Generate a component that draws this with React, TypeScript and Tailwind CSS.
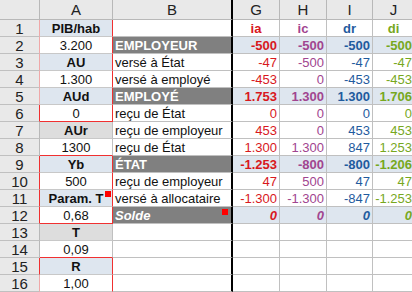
import React from 'react'

type Kind = 'label' | 'gray' | 'value'

interface ACell {
  text: string
  kind: Kind
  rRed?: boolean
  bRed?: boolean
  lhdr?: 'red' | 'pink'
  mark?: boolean
}

interface BCell {
  text: string
  head?: boolean
  italic?: boolean
  mark?: boolean
}

const aCells: ACell[] = [
  { text: 'PIB/hab', kind: 'label', rRed: true, lhdr: 'pink' },
  { text: '3.200', kind: 'value', rRed: true, lhdr: 'pink' },
  { text: 'AU', kind: 'label', rRed: true, lhdr: 'pink' },
  { text: '1.300', kind: 'value', rRed: true, lhdr: 'pink' },
  { text: 'AUd', kind: 'label', rRed: true, lhdr: 'pink' },
  { text: '0', kind: 'value', rRed: true, bRed: true, lhdr: 'red' },
  { text: 'AUr', kind: 'gray' },
  { text: '1300', kind: 'value', bRed: true },
  { text: 'Yb', kind: 'label', rRed: true, lhdr: 'red' },
  { text: '500', kind: 'value', rRed: true, lhdr: 'red' },
  { text: 'Param. T', kind: 'label', rRed: true, lhdr: 'red', mark: true },
  { text: '0,68', kind: 'value', rRed: true, bRed: true, lhdr: 'red' },
  { text: 'T', kind: 'gray' },
  { text: '0,09', kind: 'value', bRed: true },
  { text: 'R', kind: 'label', rRed: true, lhdr: 'red' },
  { text: '1,00', kind: 'value', rRed: true, lhdr: 'pink' },
]

const bCells: BCell[] = [
  { text: '' },
  { text: 'EMPLOYEUR', head: true },
  { text: 'versé à État' },
  { text: 'versé à employé' },
  { text: 'EMPLOYÉ', head: true },
  { text: 'reçu de État' },
  { text: 'reçu de employeur' },
  { text: 'reçu de État' },
  { text: 'ÉTAT', head: true },
  { text: 'reçu de employeur' },
  { text: 'versé à allocataire' },
  { text: 'Solde', head: true, italic: true, mark: true },
  { text: '' },
  { text: '' },
  { text: '' },
  { text: '' },
]

// values per row for G, H, I, J
const values: (string[] | null)[] = [
  ['ia', 'ic', 'dr', 'di'],
  ['-500', '-500', '-500', '-500'],
  ['-47', '-500', '-47', '-47'],
  ['-453', '0', '-453', '-453'],
  ['1.753', '1.300', '1.300', '1.706'],
  ['0', '0', '0', '0'],
  ['453', '0', '453', '453'],
  ['1.300', '1.300', '847', '1.253'],
  ['-1.253', '-800', '-800', '-1.206'],
  ['47', '500', '47', '47'],
  ['-1.300', '-1.300', '-847', '-1.253'],
  ['0', '0', '0', '0'],
  null,
  null,
  null,
  null,
]

const colText = ['text-[#d8181d]', 'text-[#a1458f]', 'text-[#1f5b9e]', 'text-[#77a81e]']
const colWidth = ['w-[47px]', 'w-[47px]', 'w-[46px]', 'w-[42px]']

function RowHeader({ n, lhdr }: { n: number; lhdr?: 'red' | 'pink' }) {
  const edge =
    lhdr === 'red'
      ? 'border-r-[#f03030]'
      : lhdr === 'pink'
        ? 'border-r-[#f0a8a8]'
        : 'border-r-[#b8b8b8]'
  return (
    <div
      className={`w-[40px] shrink-0 flex items-center justify-center bg-[#e9e9e9] border-b border-b-[#c0c0c0] border-r ${edge} text-[15px] text-[#222]`}
    >
      {n}
    </div>
  )
}

function CellA({ c }: { c: ACell }) {
  const bg = c.kind === 'label' ? 'bg-[#dee6ef] font-bold' : c.kind === 'gray' ? 'bg-[#dddddd] font-bold' : 'bg-white'
  const right = c.rRed ? 'border-r-[#f03030]' : 'border-r-[#c0c0c0]'
  const bottom = c.bRed ? 'border-b-[#f03030]' : 'border-b-[#c8c8c8]'
  return (
    <div
      className={`relative w-[73px] shrink-0 flex items-center justify-center border-r border-b ${right} ${bottom} ${bg} text-[#111]`}
    >
      {c.text}
      {c.mark && <span className="absolute right-[1px] top-[1px] w-[6px] h-[6px] bg-[#ff0000]" />}
    </div>
  )
}

function CellB({ c }: { c: BCell }) {
  const style = c.head
    ? `bg-[#808080] text-white font-bold ${c.italic ? 'italic' : ''}`
    : 'bg-white text-[#111]'
  return (
    <div
      className={`relative w-[120px] shrink-0 flex items-center pl-[2px] border-b border-b-[#c0c0c0] border-r-2 border-r-black whitespace-nowrap overflow-hidden ${style}`}
    >
      {c.text}
      {c.mark && <span className="absolute right-[3px] top-[2px] w-[6px] h-[6px] bg-[#ff0000]" />}
    </div>
  )
}

function ValueCells({ row, idx }: { row: string[] | null; idx: number }) {
  const isHeader = idx === 0
  const bold = idx === 1 || idx === 4 || idx === 8 || idx === 11
  return (
    <>
      {[0, 1, 2, 3].map((k) => (
        <div
          key={k}
          className={`${colWidth[k]} shrink-0 flex items-center border-b border-r border-[#c0c0c0] whitespace-nowrap ${
            isHeader ? 'justify-center font-bold' : 'justify-end pr-[2px]'
          } ${bold ? 'bg-[#dee6ef] font-bold' : 'bg-white'} ${idx === 11 ? 'italic' : ''} ${colText[k]}`}
        >
          {row ? row[k] : ''}
        </div>
      ))}
    </>
  )
}

export default function App() {
  const cols = ['G', 'H', 'I', 'J']
  return (
    <div className="w-[412px] h-[292px] overflow-hidden bg-white font-['Liberation_Sans',Arial,sans-serif] text-[13px] leading-[15px]">
      {/* column headers */}
      <div className="flex h-[20px] bg-[#e9e9e9] text-[15px] text-[#222]">
        <div className="w-[40px] shrink-0 border-r border-b border-[#b8b8b8]" />
        <div className="w-[73px] shrink-0 flex items-center justify-center border-r border-b border-[#b8b8b8]">A</div>
        <div className="w-[120px] shrink-0 flex items-center justify-center border-b border-b-[#b8b8b8] border-r-2 border-r-black">
          B
        </div>
        {cols.map((c, k) => (
          <div
            key={c}
            className={`${colWidth[k]} shrink-0 flex items-center justify-center border-r border-b border-[#b8b8b8]`}
          >
            {c}
          </div>
        ))}
      </div>

      {/* rows */}
      {aCells.map((a, i) => (
        <div key={i} className="flex h-[17px]">
          <RowHeader n={i + 1} lhdr={a.lhdr} />
          <CellA c={a} />
          <CellB c={bCells[i]} />
          <ValueCells row={values[i]} idx={i} />
        </div>
      ))}
    </div>
  )
}
